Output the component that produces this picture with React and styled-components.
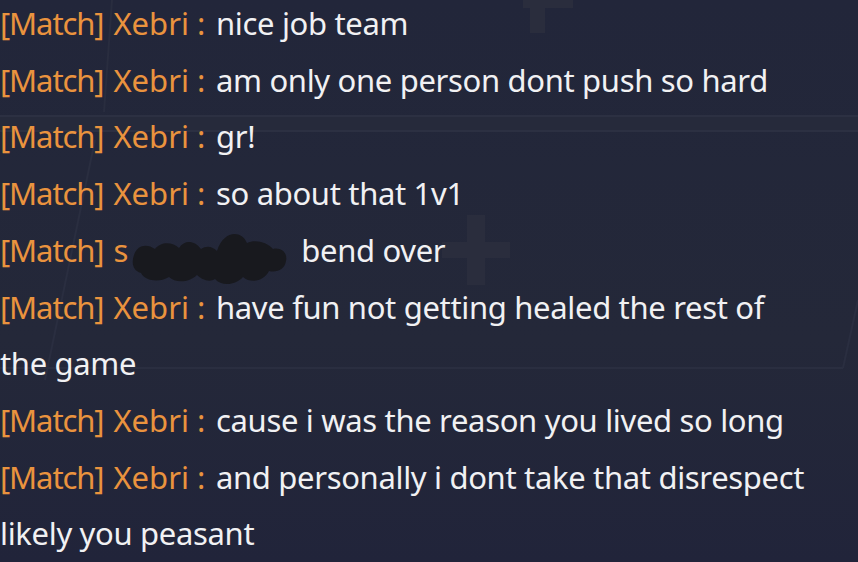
import React from 'react';
import styled, { createGlobalStyle } from 'styled-components';

const GlobalStyle = createGlobalStyle`
  html, body {
    margin: 0;
    padding: 0;
    background: #22263a;
    overflow: hidden;
  }
`;

const messages = [
  { name: 'Xebri', text: 'nice job team' },
  { name: 'Xebri', text: 'am only one person dont push so hard' },
  { name: 'Xebri', text: 'gr!' },
  { name: 'Xebri', text: 'so about that 1v1' },
  { name: 's', text: 'bend over', hidden: true },
  { name: 'Xebri', text: 'have fun not getting healed the rest of the game' },
  { name: 'Xebri', text: 'cause i was the reason you lived so long' },
  { name: 'Xebri', text: 'and personally i dont take that disrespect likely you peasant' },
];

const Screen = styled.div`
  position: relative;
  width: 858px;
  height: 562px;
  overflow: hidden;
  background: linear-gradient(180deg, #22263a 0%, #242839 60%, #21243a 100%);
`;

const Backdrop = styled.svg`
  position: absolute;
  inset: 0;
  pointer-events: none;
`;

const Log = styled.div`
  position: relative;
  width: 812px;
  font-family: "Noto Sans", "Open Sans", sans-serif;
  font-size: 31px;
  line-height: 56.7px;
  letter-spacing: -0.33px;
  color: #f1f1f3;
`;

const Line = styled.div`
  margin-top: ${(p) => (p.first ? '-5px' : '0')};
`;

const Channel = styled.span`
  color: #ea933e;
  letter-spacing: -1.1px;
`;

const Sender = styled.span`
  color: #ea933e;
  letter-spacing: 0;
  margin-left: 10px;
`;

const Colon = styled.span`
  color: #ea933e;
  margin: 0 11px 0 8px;
`;

const Scribble = styled.svg`
  display: inline-block;
  vertical-align: middle;
  width: 158px;
  height: 58px;
  margin: -20px 12px -20px 3px;
  position: relative;
  top: 4px;
`;

const Redacted = () => (
  <Scribble viewBox="0 0 158 58">
    <path
      d="M3 26 C6 16 16 14 24 20 C30 12 42 13 48 19 C54 10 64 12 70 20 C76 16 82 18 86 22 C92 2 110 0 116 14 C124 10 136 13 142 20 C150 18 157 24 155 32 C154 40 146 44 138 42 C133 52 120 55 112 48 C104 57 90 57 84 50 C78 54 70 50 66 46 C58 54 44 54 38 48 C28 54 14 52 10 44 C2 42 0 34 3 26 Z"
      fill="#18191e"
    />
  </Scribble>
);

const App = () => {
  return (
    <Screen>
      <GlobalStyle />
      <Backdrop width="858" height="562" viewBox="0 0 858 562">
        <rect x="0" y="115" width="858" height="17" fill="#262a3b" />
        <line x1="0" y1="116" x2="858" y2="116" stroke="#2c3042" strokeWidth="2" />
        <line x1="0" y1="131" x2="858" y2="131" stroke="#2c3042" strokeWidth="2" />
        <line x1="112" y1="0" x2="104" y2="112" stroke="#292d3f" strokeWidth="2" />
        <line x1="95" y1="140" x2="45" y2="380" stroke="#2a2e40" strokeWidth="2" />
        <line x1="0" y1="368" x2="843" y2="368" stroke="#2a2e40" strokeWidth="2" />
        <line x1="843" y1="368" x2="858" y2="300" stroke="#2a2e40" strokeWidth="2" />
        <rect x="523" y="0" width="50" height="8" fill="#2a2d3d" />
        <rect x="530" y="0" width="15" height="33" fill="#2a2d3d" />
        <rect x="442" y="242" width="68" height="16" fill="#2a2d3d" />
        <rect x="467" y="215" width="18" height="70" fill="#2a2d3d" />
      </Backdrop>
      <Log>
        {messages.map((m, i) => (
          <Line key={i} first={i === 0}>
            <Channel>[Match]</Channel>
            <Sender>{m.name}</Sender>
            {m.hidden ? <Redacted /> : <Colon>:</Colon>}
            {m.text}
          </Line>
        ))}
      </Log>
    </Screen>
  );
};

export default App;
